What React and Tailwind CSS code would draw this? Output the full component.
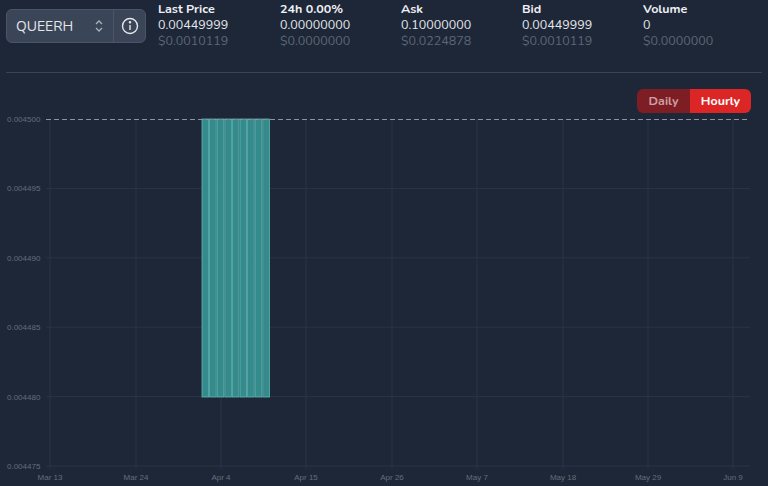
export default function App() {
  const stats = [
    ["Last Price", "0.00449999", "$0.0010119", "w-[122px]"],
    ["24h 0.00%", "0.00000000", "$0.0000000", "w-[121px]"],
    ["Ask", "0.10000000", "$0.0224878", "w-[121px]"],
    ["Bid", "0.00449999", "$0.0010119", "w-[121px]"],
    ["Volume", "0", "$0.0000000", "w-[100px]"],
  ];
  const ys = [120, 189.4, 258.8, 328.2, 397.6, 467];
  const ylabels = ["0.004500", "0.004495", "0.004490", "0.004485", "0.004480", "0.004475"];
  const xs = [50, 136, 221, 306, 392, 477, 563, 648, 733];
  const xl = ["Mar 13", "Mar 24", "Apr 4", "Apr 15", "Apr 26", "May 7", "May 18", "May 29", "Jun 9"];
  const bars = Array.from({ length: 9 }, (_, i) => 202 + i * 7.6);
  return (
    <div className="w-[768px] h-[486px] bg-[#1e2738] overflow-hidden" style={{ fontFamily: "Nunito, Lato, 'Noto Sans', sans-serif" }}>
      <div className="flex items-start pt-[1px] h-[73px] border-b border-[#3a4454] mx-[6px]">
        <div className="mt-[8px] flex h-[34px] w-[140px] rounded-md bg-[#3a4557] border border-[#4b5566]">
          <div className="flex flex-1 items-center justify-between px-[9px] text-[14px] text-[#e5e7eb]">
            QUEERH
            <svg width="10" height="14" viewBox="0 0 10 14" fill="none" stroke="#aab1bb" strokeWidth="1.3"><path d="M2 5l3-3 3 3M2 9l3 3 3-3" /></svg>
          </div>
          <div className="w-[32px] border-l border-[#4b5566] flex items-center justify-center">
            <svg width="18" height="18" viewBox="0 0 18 18" fill="none" stroke="#e5e7eb" strokeWidth="1.4"><circle cx="9" cy="9" r="7.5" /><path d="M9 8v5" /><circle cx="9" cy="5.3" r="0.6" fill="#e5e7eb" /></svg>
          </div>
        </div>
        <div className="flex ml-[12px]">
          {stats.map(([a, b, c, w]) => (
            <div key={a} className={`${w} flex flex-col text-[12.5px] leading-[16px]`}>
              <span className="font-bold text-[#eef0f3]">{a}</span>
              <span className="text-[#e5e7eb]">{b}</span>
              <span className="text-[#5d6676]">{c}</span>
            </div>
          ))}
        </div>
      </div>
      <div className="flex justify-end pr-[17px] pt-[16px]">
        <div className="flex rounded-md overflow-hidden text-[12.5px] font-bold h-[24px]">
          <div className="w-[53px] bg-[#7f1d24] text-[#c9a0a3] flex items-center justify-center">Daily</div>
          <div className="w-[61px] bg-[#dc2626] text-white flex items-center justify-center">Hourly</div>
        </div>
      </div>
      <svg width="768" height="372" viewBox="0 114 768 372" className="block">
        {ys.map((y, i) => (
          <g key={y}>
            {i > 0 && <line x1="46" x2="750" y1={y} y2={y} stroke="#2a3445" />}
            <text x="7" y={y + 3} fontSize="8" fill="#646d7b" fontFamily="Liberation Sans, sans-serif">{ylabels[i]}</text>
          </g>
        ))}
        {xs.map((x, i) => (
          <g key={x}>
            <line x1={x} x2={x} y1="120" y2="470" stroke="#2a3445" />
            <text x={x} y="481" fontSize="8" fill="#646d7b" textAnchor="middle" fontFamily="Liberation Sans, sans-serif">{xl[i]}</text>
          </g>
        ))}
        {bars.map((x) => (
          <rect key={x} x={x} y="120" width="6.6" height="278" fill="#358a8c" stroke="#5fb6b5" strokeWidth="0.8" />
        ))}
        <line x1="46" x2="750" y1="120.5" y2="120.5" stroke="#8b93a0" strokeDasharray="5 3" />
      </svg>
    </div>
  );
}
